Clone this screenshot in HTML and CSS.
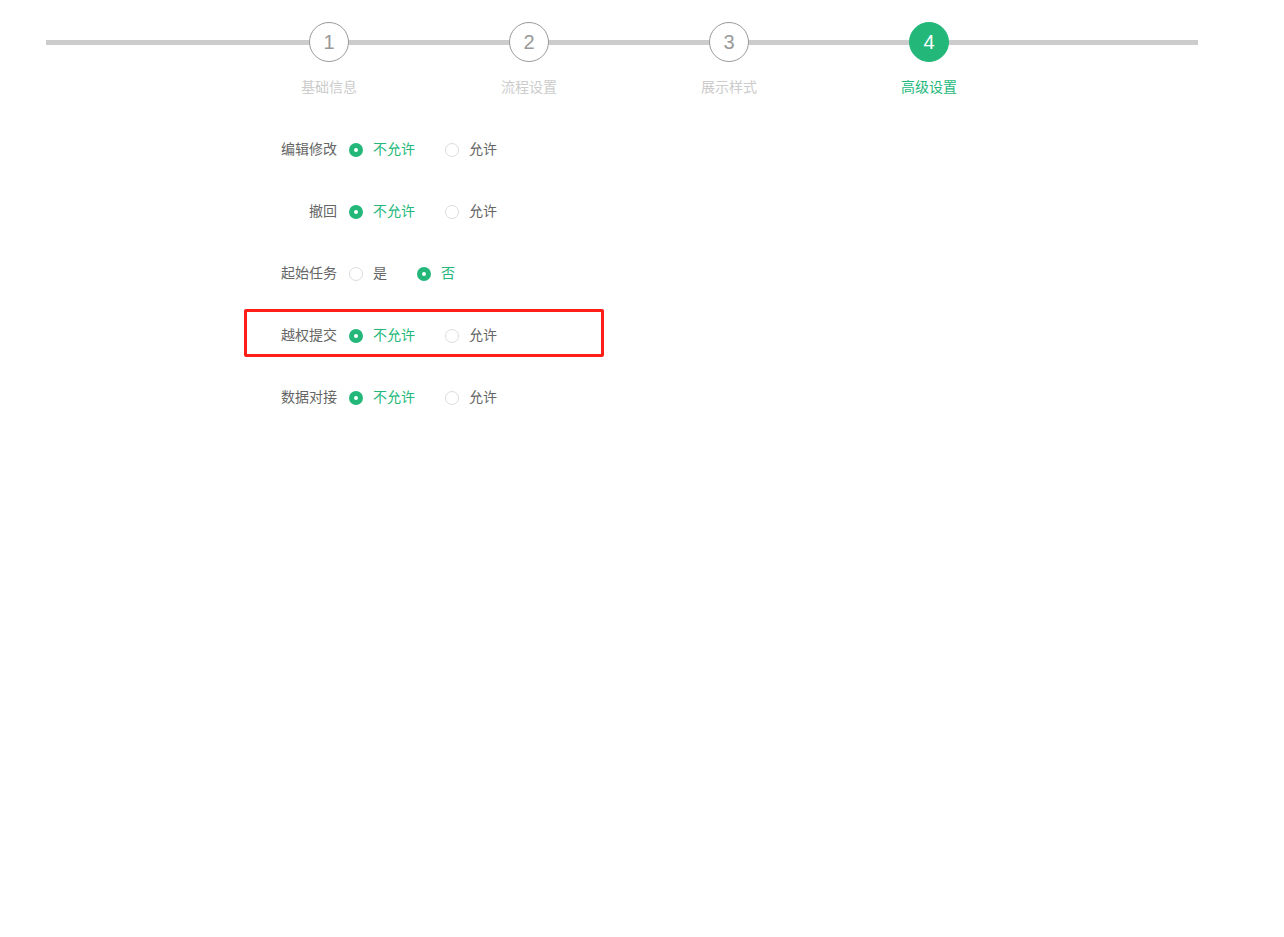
FILE: index.html
```html
<!DOCTYPE html>
<html lang="zh">
<head>
<meta charset="utf-8">
<title>高级设置</title>
<link rel="stylesheet" href="styles.css">
</head>
<body>
<div class="steps">
  <div class="step">
    <div class="step-num">1</div>
    <div class="step-title">基础信息</div>
  </div>
  <div class="step">
    <div class="step-num">2</div>
    <div class="step-title">流程设置</div>
  </div>
  <div class="step">
    <div class="step-num">3</div>
    <div class="step-title">展示样式</div>
  </div>
  <div class="step active">
    <div class="step-num">4</div>
    <div class="step-title">高级设置</div>
  </div>
</div>

<div class="form">
  <div class="row">
    <div class="label">编辑修改</div>
    <label class="radio checked"><span class="dot"></span><span class="txt">不允许</span></label>
    <label class="radio"><span class="dot"></span><span class="txt">允许</span></label>
  </div>
  <div class="row">
    <div class="label">撤回</div>
    <label class="radio checked"><span class="dot"></span><span class="txt">不允许</span></label>
    <label class="radio"><span class="dot"></span><span class="txt">允许</span></label>
  </div>
  <div class="row">
    <div class="label">起始任务</div>
    <label class="radio"><span class="dot"></span><span class="txt">是</span></label>
    <label class="radio checked"><span class="dot"></span><span class="txt">否</span></label>
  </div>
  <div class="row highlight">
    <div class="label">越权提交</div>
    <label class="radio checked"><span class="dot"></span><span class="txt">不允许</span></label>
    <label class="radio"><span class="dot"></span><span class="txt">允许</span></label>
  </div>
  <div class="row">
    <div class="label">数据对接</div>
    <label class="radio checked"><span class="dot"></span><span class="txt">不允许</span></label>
    <label class="radio"><span class="dot"></span><span class="txt">允许</span></label>
  </div>
</div>
</body>
</html>
```
FILE: styles.css
```css
html, body {
  margin: 0;
  padding: 0;
  background: #ffffff;
}
body {
  font-family: "Noto Sans CJK SC", "Liberation Sans", sans-serif;
  font-size: 14px;
  color: #666666;
}

.steps {
  position: relative;
  display: flex;
  margin-left: 46px;
  width: 1152px;
  padding: 22px 0 0 183px;
  box-sizing: border-box;
}
.steps::before {
  content: "";
  position: absolute;
  left: 0;
  right: 0;
  top: 40px;
  height: 5px;
  background: #cccccc;
}
.step {
  position: relative;
  width: 200px;
  display: flex;
  flex-direction: column;
  align-items: center;
}
.step-num {
  width: 40px;
  height: 40px;
  box-sizing: border-box;
  border: 1px solid #9a9a9a;
  border-radius: 50%;
  background: #ffffff;
  color: #999999;
  font-family: "Liberation Sans", Arial, sans-serif;
  font-size: 20px;
  line-height: 38px;
  text-align: center;
}
.step-title {
  margin-top: 14px;
  line-height: 20px;
  color: #cccccc;
  font-size: 14px;
}
.step.active .step-num {
  background: #23b87a;
  border-color: #23b87a;
  color: #ffffff;
}
.step.active .step-title {
  color: #23b87a;
}

.form {
  margin: 27px 0 0 244px;
  display: flex;
  flex-direction: column;
  gap: 14px;
}
.row {
  width: 360px;
  height: 48px;
  box-sizing: border-box;
  border: 3px solid transparent;
  border-radius: 2px;
  display: flex;
  align-items: center;
  padding-top: 2px;
}
.row.highlight {
  border-color: #ff1f16;
}
.label {
  width: 90px;
  text-align: right;
  margin-right: 12px;
  color: #666666;
  line-height: 20px;
}
.radio {
  display: flex;
  align-items: center;
  margin-right: 30px;
  line-height: 20px;
  color: #666666;
}
.dot {
  width: 14px;
  height: 14px;
  box-sizing: border-box;
  border: 1px solid #dcdce2;
  border-radius: 50%;
  background: #ffffff;
  margin-right: 10px;
  margin-top: 3px;
}
.radio.checked .dot {
  border: 5px solid #23b87a;
}
.radio.checked .txt {
  color: #23b87a;
}
```
